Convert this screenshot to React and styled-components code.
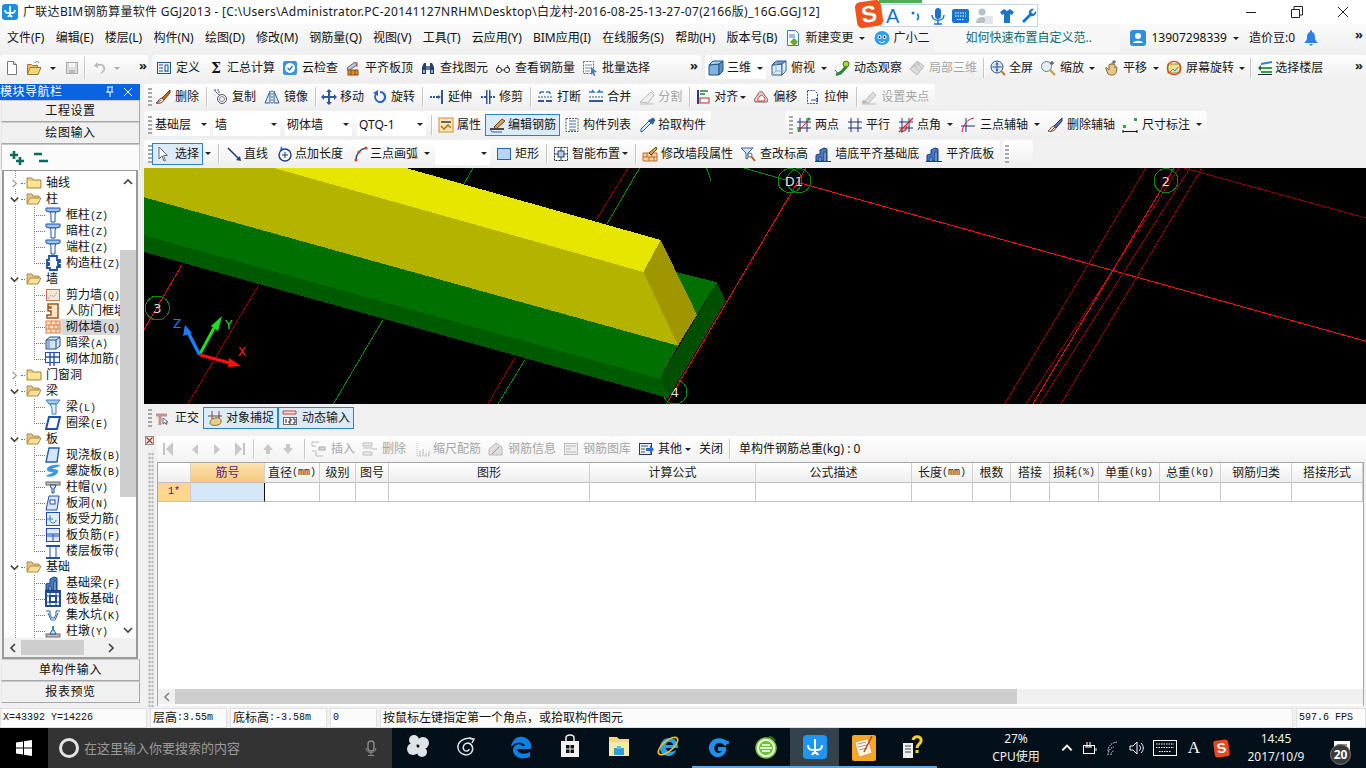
import React from 'react';
import styled, { createGlobalStyle, css } from 'styled-components';

const Global = createGlobalStyle`
  html, body { margin: 0; padding: 0; background: #f0f0f0; overflow: hidden; }
  * { box-sizing: border-box; }
`;

const UI = `"Noto Sans", "Noto Sans CJK SC", sans-serif`;
const MONO = `"Liberation Mono", "Noto Sans CJK SC", monospace`;

const Page = styled.div`
  width: 1366px; height: 768px; overflow: hidden; position: relative;
  display: flex; flex-direction: column; background: #f0f0f0;
  font: 12px/16px ${UI}; color: #111;
`;

/* ---------- icons ---------- */
const Svg = styled.svg`flex: none; display: block;`;
const columnIcon = <><path d="M1 1h14v3l-4 1H5L1 4z" fill="#9cc4ee" stroke="#1f4fa8" /><path d="M5 5h6l-1 2v8H6V7z" fill="#fff" stroke="#1f4fa8" /></>;
const buildIcon = <><path d="M1 15V9l4-1V4l4-2 3 1v12z" fill="#4a78c0" stroke="#173e84" /><path d="M4 15v-4h2v4M9 15V6h2v9" fill="#cfe0f5" stroke="#173e84" /><path d="M0 15.5h16" stroke="#173e84" /></>;
const ICONS = {
  logo: <><rect x="0" y="0" width="16" height="16" rx="3" fill="#1a8fe8" /><path d="M8 2v9M3 6c0 3 2 3 5 3s5 0 5-3M6 13c1-2 3-2 4 0" fill="none" stroke="#fff" strokeWidth="1.8" /></>,
  new: <><path d="M3.5 1.5h6l3 3v10h-9z" fill="#fff" stroke="#777" /><path d="M9.5 1.5v3h3" fill="#ddd" stroke="#777" /></>,
  open: <><path d="M1.5 14V4.5h4l1 1h5V8" fill="#e8c36a" stroke="#9a7a2a" /><path d="M1.5 14.5l2.5-7h11l-3 7z" fill="#f3d67f" stroke="#9a7a2a" /><path d="M9 3c1-2 3-2 4 0" fill="none" stroke="#3a7bd0" /></>,
  save: <><rect x="2.5" y="2.5" width="11" height="11" fill="#ddd" stroke="#aaa" /><rect x="5" y="3" width="6" height="4" fill="#f5f5f5" /><rect x="5" y="10" width="6" height="3" fill="#bbb" /></>,
  undo: <path d="M5 2L2 6l4 2V6c4-1 6 1 5 4l-3 4c4-1 6-4 5-7-1-3-4-4-7-3z" fill="#bbb" />,
  define: <><rect x="1.5" y="2.5" width="13" height="11" fill="#eaf2fb" stroke="#23558f" /><path d="M3 5h4M3 8h4M3 11h4M9 5v7M12 5v7M9 5h3M9 11h3" stroke="#23558f" /></>,
  cloud: <><rect x="1" y="1" width="14" height="14" rx="2" fill="#3a94dc" /><circle cx="8" cy="8" r="5" fill="#fff" /><path d="M5.5 8l2 2 3-4" fill="none" stroke="#2a7cc0" strokeWidth="1.4" /></>,
  alignTop: <><path d="M2 8l8-6 2 3-9 6z" fill="#b8c8d8" stroke="#667" /><rect x="3" y="10" width="10" height="5" fill="#e0902a" stroke="#8a4d10" /><path d="M6 10v5M10 10v5" stroke="#8a4d10" /><path d="M12 2v5" stroke="#d33" /></>,
  find: <><path d="M2 14V7l2-4h2v11zM14 14V7l-2-4h-2v11z" fill="#2a3f66" /><rect x="6" y="6" width="4" height="4" fill="#5e7aa8" /><rect x="3" y="10" width="2" height="3" fill="#8fb0de" /><rect x="11" y="10" width="2" height="3" fill="#8fb0de" /></>,
  glasses: <><circle cx="4" cy="10" r="2.6" fill="none" stroke="#333" /><circle cx="12" cy="10" r="2.6" fill="none" stroke="#333" /><path d="M6.5 10h3M1.5 9L4 5M14.5 9L12 5" stroke="#333" fill="none" /></>,
  batch: <><rect x="1.5" y="1.5" width="10" height="12" fill="#fff" stroke="#667" strokeDasharray="2 1" /><path d="M3 5h7M3 8h7M3 11h5" stroke="#7a8aa8" /><path d="M9 7l6 5-3 .5 1.5 3-1.5.5-1.5-3L9 15z" fill="#4a7ac0" /></>,
  docGreen: <><path d="M2.5 .5h8l3 3v12h-11z" fill="#fff" stroke="#3c78c8" /><path d="M4 5h6M4 7h6" stroke="#3c78c8" /><path d="M9 8l4 4-4 4-4-4z" fill="#5cae2a" /></>,
  mascot: <><ellipse cx="8" cy="8" rx="7.5" ry="7" fill="#2f9ff0" /><circle cx="5.5" cy="7" r="2" fill="#fff" /><circle cx="10.5" cy="7" r="2" fill="#fff" /><circle cx="5.5" cy="7" r="1" fill="#123" /><circle cx="10.5" cy="7" r="1" fill="#123" /><path d="M5 11c2 2 4 2 6 0" fill="none" stroke="#fff" /></>,
  user: <><rect width="16" height="16" rx="3" fill="#2f8fd8" /><circle cx="8" cy="6" r="3" fill="#fff" /><path d="M3 13c1-3 9-3 10 0z" fill="#fff" /></>,
  bell: <><path d="M8 0c1 0 1 1 1 2 3 1 3 4 3 6s1 3 3 5H1c2-2 3-3 3-5s0-5 3-6c0-1 0-2 1-2z" fill="#2a7fe8" /><path d="M6 14h4l-2 2z" fill="#2a7fe8" /></>,
  cube: <><path d="M1 5l10-1v11H1z" fill="#7fb2dc" stroke="#1f5588" /><path d="M1 5l4-4h10l-4 3z" fill="#a8d0f0" stroke="#1f5588" /><path d="M11 4l4-3v10l-4 4z" fill="#5a90c0" stroke="#1f5588" /></>,
  cubeV: <><path d="M1 5l10-1v11H1z" fill="#dbeaf7" stroke="#2a5f96" /><path d="M1 5l4-4h10l-4 3z" fill="#6a9ed0" stroke="#2a5f96" /><path d="M11 4l4-3v10l-4 4z" fill="#eaf3fb" stroke="#2a5f96" /><path d="M5 1v10l-4 4M5 11h10" stroke="#8fb3d8" fill="none" /></>,
  orbit: <><path d="M2 14c3 1 10-5 12-11" fill="none" stroke="#2c8a2c" strokeWidth="3" /><circle cx="12" cy="4" r="3" fill="#a6d63a" stroke="#3a7a1a" /><path d="M1 10c2 3 4 4 7 4" fill="none" stroke="#3a64b0" /></>,
  local3d: <><path d="M8 1l7 5-7 9-7-6z" fill="#ddd" stroke="#bbb" /><path d="M4 4l7 8M8 2l5 7M2 8l8-5" stroke="#bbb" /></>,
  full: <><circle cx="7" cy="7" r="6" fill="#d8e8f8" stroke="#2b4f8a" /><path d="M7 2.5v9M2.5 7h9" stroke="#2b4f8a" /><path d="M7 2.5l-1.5 2h3zM7 11.5l-1.5-2h3z" fill="#2b4f8a" /><path d="M11 11l4 4" stroke="#c07820" strokeWidth="2" /></>,
  zoom: <><circle cx="6.5" cy="6.5" r="5" fill="#e6eef8" stroke="#6a7a8a" /><path d="M10 10l5 5" stroke="#c8a23a" strokeWidth="2.4" /><path d="M12 1v4M10 3h4" stroke="#335" /></>,
  pan: <><path d="M3 9l2 5c3 2 7 1 8-1l1-5c0-2-2-1-2 0V5c0-1-2-1-2 0V4c0-1-2-1-2 0v1C8 4 6 4 6 5v5L4 8c-1-1-2 0-1 1z" fill="#e4c88a" stroke="#8a6a30" /><path d="M11 0v4M9 2h4" stroke="#446" /></>,
  rot: <><rect x="2" y="4" width="12" height="9" fill="#f4e28a" stroke="#7a9a3a" /><circle cx="8" cy="8" r="6.7" fill="none" stroke="#d8442a" strokeWidth="1.3" /><path d="M4 12l3-3 2 2 3-4" fill="none" stroke="#3a8acc" /></>,
  floors: <><path d="M4 3l11-2v2L4 5z" fill="#2a7fc8" /><path d="M4 7h11v2H4zM4 11h11v2H4z" fill="#3a9a4a" /><path d="M4 5L1 8l3 3z" fill="#1e6a2a" /><path d="M1 14.5h14" stroke="#224" /></>,
  brush: <><path d="M15 1L7 9l2 2 6-7z" fill="#c06a28" stroke="#6a3a18" /><path d="M7 9c-3 0-3 3-6 5 3 1 7 0 8-3z" fill="#e8e0c0" stroke="#555" /><path d="M2 14l4-3" stroke="#c33" /></>,
  copy: <><circle cx="10" cy="10" r="4.5" fill="none" stroke="#556" /><circle cx="10" cy="10" r="2.5" fill="none" stroke="#88a" /><path d="M2 1h5v5" fill="none" stroke="#556" strokeDasharray="2 1" /><path d="M2 1l5 5" stroke="#4a7ac0" /></>,
  mirror: <><path d="M1 14L6 2v12zM15 14L10 2v12z" fill="#dbe7f4" stroke="#2f5f96" /><path d="M8 1v14" stroke="#2f5f96" strokeDasharray="2 1" /></>,
  move: <><path d="M8 0l3 3H9v4h4V5l3 3-3 3V9H9v4h2l-3 3-3-3h2V9H3v2L0 8l3-3v2h4V3H5z" fill="#33588f" /></>,
  rotate: <path d="M8 2a6 6 0 1 1-5 3l-2-1 5-3v6L4.500 6a4 4 0 1 0 3.500-2z" fill="#2b64c8" />,
  extend: <><path d="M1 8h9" stroke="#33588f" strokeDasharray="2 1" strokeWidth="2" /><path d="M9 6l3 2-3 2z" fill="#33588f" /><rect x="12" y="1" width="2" height="14" fill="#33588f" /></>,
  trim: <><path d="M1 8h5M10 8h5" stroke="#33588f" strokeWidth="2" strokeDasharray="2 1" /><rect x="6" y="1" width="1.500" height="14" fill="#33588f" /><rect x="9" y="1" width="1.500" height="14" fill="#33588f" /></>,
  brk: <><path d="M3 3l4 0M13 3H9M3 3v2M13 3v2" stroke="#2f78c0" fill="none" strokeWidth="1.400" /><path d="M1 12h6M9 12h6" stroke="#33588f" strokeWidth="2" /><path d="M1 8h14" stroke="#33588f" strokeDasharray="2 1" /></>,
  merge: <><path d="M1 3h5l-2-2M15 3h-5l2-2" stroke="#2f78c0" fill="none" strokeWidth="1.400" /><path d="M1 12h14" stroke="#33588f" strokeWidth="2" /><path d="M1 8h14" stroke="#33588f" strokeDasharray="2 1" /></>,
  split: <><path d="M1 13L12 3l3 3-6 8z" fill="#eee" stroke="#bbb" /><path d="M1 15h14M12 1l3 3" stroke="#bbb" /></>,
  align: <><path d="M2 1v14" stroke="#1f3f88" strokeWidth="2" /><path d="M4 2h8M4 5h5" stroke="#2a7a3a" strokeWidth="1.400" /><rect x="4" y="9" width="9" height="5" fill="none" stroke="#c0342a" /></>,
  offset: <><path d="M2 13c-2-4 2-5 3-8 1-3 5-3 6 0s5 4 3 8z" fill="#f6c8c0" stroke="#667" /><path d="M5 12c-1-3 1-3 2-5 1-1 2-1 3 0s3 3 1 5z" fill="#fff" stroke="#c0443a" /></>,
  stretch: <><path d="M2.500 1.500h7l3 3v10h-10z" fill="#fff" stroke="#2a4f88" strokeDasharray="2 1" /><path d="M6 11h7M11 9l2 2-2 2" stroke="#2a4f88" fill="none" /></>,
  grip: <><path d="M3 13L12 3l3 3-7 8z" fill="#ddd" stroke="#bbb" /><circle cx="3" cy="13" r="2" fill="#bbb" /><path d="M1 15h14" stroke="#bbb" /></>,
  attr: <><rect x="1" y="1" width="14" height="14" fill="#fce7b8" stroke="#d88a30" /><path d="M3 5h10" stroke="#666" strokeWidth="2" /><path d="M3 9l3 3 4-4 3 3" fill="none" stroke="#b5781a" strokeWidth="1.600" /></>,
  edit: <><path d="M1 12h14" stroke="#222" strokeWidth="1.600" /><path d="M5 10l8-8 3 2-9 8z" fill="#d9a24a" stroke="#6a4418" /><path d="M1 12l2 3h10" stroke="#2a5fa8" fill="none" /></>,
  list: <><rect x="2" y="1.500" width="12" height="13" fill="#fff" stroke="#555" strokeDasharray="2 1" /><path d="M5 4h7M5 7h7M5 10h7M5 13h7" stroke="#3a6ab0" /></>,
  pick: <><path d="M1 15l2-1 8-8-2-2-8 8z" fill="#dbeafb" stroke="#2a5fa8" /><path d="M8 3l5 5 1-3 1-1c1-1-2-4-3-3l-1 1z" fill="#2a5fa8" /></>,
  twoPt: <><path d="M4 1v14M11 1v14M1 5h14M1 11h14" stroke="#1f2f7a" /><path d="M2 15L14 1" stroke="#d32222" /><circle cx="3" cy="13" r="1.500" fill="#2a9a2a" /><circle cx="13" cy="2" r="1.500" fill="#2a9a2a" /></>,
  par: <path d="M4 1v14M11 1v14M1 5h14M1 11h14" stroke="#1f2f7a" fill="none" />,
  ang: <><path d="M4 1v14M11 1v14M1 5h14M1 11h14" stroke="#1f2f7a" /><path d="M1 15L15 1M3 15c4-1 6-3 6-6" stroke="#d32222" fill="none" strokeWidth="1.300" /></>,
  arcA: <><path d="M1 9h14M6 1v14" stroke="#1f2f7a" /><path d="M2 15C3 7 8 2 14 1" fill="none" stroke="#d32222" /></>,
  delA: <><path d="M15 1L7 9l2 2 6-7z" fill="#4a78c0" stroke="#234" /><path d="M7 9c-3 0-3 3-6 5 3 1 7 0 8-3z" fill="#eadfc8" stroke="#555" /><path d="M3 15l9-9" stroke="#d33" /></>,
  dim: <><rect x="1" y="8" width="3" height="3" fill="#3ca03c" /><rect x="12" y="1" width="3" height="3" fill="#3ca03c" /><path d="M1 13v3M15 13v3M1 14.500h14" stroke="#111" /></>,
  cursor: <path d="M4 1v12l3-3 2 5 1.500-.5-2-5h4z" fill="#fff" stroke="#667" />,
  line: <><path d="M2 2l11 11" stroke="#1f3f7a" strokeWidth="1.600" /><path d="M15 15l-5-1 4-4z" fill="#1f3f7a" /></>,
  ptLen: <><circle cx="9" cy="9" r="6" fill="none" stroke="#1f3f7a" strokeWidth="1.400" /><path d="M9 6v6M6 9h6" stroke="#1f3f7a" /><path d="M5 0l2 3-3 2z" fill="#1f6ad0" /></>,
  arc: <><path d="M3 14C3 8 7 3 13 2" fill="none" stroke="#1f4f90" strokeWidth="1.500" /><circle cx="3" cy="14" r="1.600" fill="#d8442a" /><circle cx="6" cy="6" r="1.600" fill="#d8442a" /><circle cx="13" cy="2" r="1.600" fill="#d8442a" /></>,
  rect: <rect x="1.500" y="2.500" width="13" height="11" fill="#b7d3f5" stroke="#2a5fb0" />,
  smart: <><rect x="1.500" y="1.500" width="13" height="13" fill="#fff" stroke="#222" strokeDasharray="2 1" /><rect x="5" y="5" width="6" height="6" fill="#b8cde8" stroke="#246" /><path d="M8 1v4M8 11v4M1 8h4M11 8h4" stroke="#246" /></>,
  wallP: <><path d="M1 7h14v8H1z" fill="#f6d3a8" stroke="#c06a28" /><path d="M1 11h14M5 7v4M10 7v4M7 11v4M12 11v4" stroke="#c06a28" /><path d="M7 7l7-6 1 2-6 6z" fill="#d8a84a" stroke="#66481a" /></>,
  elev: <><path d="M1 2h12L8 7v5l-2 1V7z" fill="#d6e2ef" stroke="#3a64a0" /><path d="M11 10l4 5" stroke="#a06a20" strokeWidth="2" /><circle cx="10" cy="9" r="2" fill="#fff" stroke="#666" /></>,
  wallB: buildIcon,
  ortho: <><path d="M1 5h11" stroke="#c89090" strokeWidth="3" /><path d="M5 4v11" stroke="#c89090" strokeWidth="3" /><path d="M8 8v6l2-1.500 1 2 1-.5-1-2h2z" fill="#fff" stroke="#667" /></>,
  snap: <><path d="M1 6h14" stroke="#555" /><path d="M5 1v8M12 1v8" stroke="#a33" /><path d="M3 13c0-4 5-6 9-5 3 1 3 6-1 7-4 1-8 0-8-2z" fill="#e6cf8a" stroke="#8a6a2a" /></>,
  dyn: <><path d="M1 1h13v3H1z" fill="#f8dfd8" stroke="#c0443a" /><rect x="1.500" y="7.500" width="13" height="7" fill="#fff" stroke="#667" /><path d="M4 9v4M7 9h2v2H7v2h2M11 9h2v4h-2" stroke="#222" fill="none" /></>,
  close: <><rect x="0.500" y="0.500" width="11" height="11" fill="#f4e7e2" stroke="#777" /><path d="M2 2l8 8M10 2l-8 8" stroke="#9a3a2a" strokeWidth="1.500" /></>,
  first: <><path d="M3 2v12" stroke="#c4c4c4" strokeWidth="2" /><path d="M12 1v14L5 8z" fill="#c8c8c8" /></>,
  prev: <path d="M11 3v11L5 8.500z" fill="#c8c8c8" />,
  next: <path d="M5 3v11l6-5.500z" fill="#c8c8c8" />,
  last: <><path d="M13 2v12" stroke="#c4c4c4" strokeWidth="2" /><path d="M4 1v14l7-7z" fill="#c8c8c8" /></>,
  up: <path d="M8 3l5 6h-3v4H6V9H3z" fill="#c8c8c8" />,
  down: <path d="M8 13l5-6h-3V3H6v4H3z" fill="#c8c8c8" />,
  ins: <><path d="M2 1h7M2 1v4h4M2 10h4v5h7" stroke="#bbb" fill="none" /><rect x="9" y="6" width="6" height="3" fill="#ddd" stroke="#aaa" /></>,
  del: <><path d="M1 2h9v3H1zM1 7h9M1 11h9v3H1z" fill="#eee" stroke="#bbb" /><path d="M10 8h5" stroke="#bbb" /></>,
  scale: <><path d="M2 2v13h13" stroke="#bbb" fill="none" strokeDasharray="1 1" /><path d="M5 15v-5M8 15V8M11 15v-3M14 15v-5" stroke="#bbb" /></>,
  info: <><path d="M1 14V8l7-6 6 4v8z" fill="#ddd" stroke="#bbb" /><path d="M4 13l7-7" stroke="#999" /></>,
  lib: <><rect x="1.500" y="2.500" width="13" height="11" fill="#eee" stroke="#bbb" /><path d="M3 5h10M3 8h5M3 11h10" stroke="#bbb" /></>,
  other: <><rect x="1.500" y="2.500" width="12" height="11" fill="#e8f0fa" stroke="#335" /><path d="M3 5h7M3 8h4M3 11h4" stroke="#556" /><path d="M8 7h4V4l4 4.500L12 13v-3H8z" fill="#2a6ad8" /></>,
  plus: <><path d="M1 5h8M5 1v8M7 11h8M11 7v8" stroke="#0f6a5e" strokeWidth="2.600" /></>,
  minus: <path d="M1 4h8M6 11h9" stroke="#0f6a5e" strokeWidth="2.600" />,
  folder: <><path d="M1 13V3h5l1 2h8v8z" fill="#f3cd66" stroke="#a98a4a" /><rect x="2" y="6" width="12" height="6" fill="#fbe69a" /></>,
  folderO: <><path d="M1 13V3h5l1 2h6v2" fill="#e8c878" stroke="#a98a4a" /><path d="M1 13l3-6h11l-3 6z" fill="#fbe09a" stroke="#a98a4a" /></>,
  col: columnIcon,
  cons: <path d="M4 1h8v4h3v2h-2v3h2v2h-3v3H5v-2H2v-3h2V8H2V5h2z" fill="#fff" stroke="#1f4fa8" strokeWidth="1.800" />,
  shear: <><rect x="1.500" y="2.500" width="13" height="11" fill="#f4e8de" stroke="#c8784a" /><path d="M3 12l3-4 3 2 3-5" stroke="#8a8a8a" strokeDasharray="1 1" fill="none" /></>,
  door: <path d="M3 1h10v14H2v-3h4V8H3V5h3V4H3z" fill="#f8e6c8" stroke="#a05a1a" strokeWidth="1.500" />,
  brick: <><rect x="1" y="2" width="14" height="12" fill="#fbe0c0" stroke="#d8804a" /><path d="M1 6h14M1 10h14M6 2v4M11 2v4M4 6v4M9 6v4M13 6v4M6 10v4M11 10v4" stroke="#d8804a" /></>,
  darkB: <><path d="M1 5l4-3h10v9l-4 3H1z" fill="#d8e4f0" stroke="#1f4f90" /><path d="M1 5h10v9M11 5l4-3" fill="none" stroke="#1f4f90" /><rect x="2" y="6" width="3" height="7" fill="#8fb0d8" /></>,
  wallBar: <><rect x="0.500" y="1.500" width="14" height="10" fill="none" stroke="#1f4fb0" /><path d="M5 1v14M9 1v14M0 6h15" stroke="#1f4fb0" strokeWidth="1.400" /></>,
  beam: <><path d="M1 1h14l-3 4H4z" fill="#a8cbee" stroke="#3a7cc0" /><path d="M5 5h6v10H7V9z" fill="#e4f0fb" stroke="#3a7cc0" /></>,
  ring: <path d="M4 2h11l-3 12H1z" fill="#fff" stroke="#1f4fb0" strokeWidth="2" />,
  slab: <path d="M4 1h10l-2 14H1z" fill="#d4e6fa" stroke="#1f5fb0" strokeWidth="1.400" />,
  spiral: <path d="M2 6c0-4 10-5 13-4-1 3-6 2-8 4 3 0 7 0 6 3-1 4-9 6-12 4 2-2 6-2 7-4-3 0-6 0-6-3z" fill="#3a9ae0" />,
  cap: <><rect x="1" y="3" width="14" height="3" fill="#c0c0c0" stroke="#666" /><path d="M5 6h6l-1 3H9v5H7V9H6z" fill="#dbe8f8" stroke="#1f4fb0" /></>,
  hole: <><path d="M4 1h10l-2 14H1z" fill="#dbe7f8" stroke="#1f4fb0" /><rect x="5" y="5" width="5" height="4" fill="#fff" stroke="#1f4fb0" /></>,
  sBar: <><rect x="1.500" y="1.500" width="13" height="13" fill="#e0ecf8" stroke="#1f4fb0" /><path d="M5 4v5c0 4 6 4 6 0M2 8h6" fill="none" stroke="#3a7cc0" /></>,
  nBar: <><rect x="1.500" y="1.500" width="13" height="13" fill="#e0ecf8" stroke="#1f4fb0" /><path d="M2 7h12M2 9h12M8 7v7" stroke="#1f4fb0" fill="none" /></>,
  band: <><path d="M1 3h14M1 15h14" stroke="#1f4fb0" strokeWidth="2" /><path d="M5 3v12M11 3v12" stroke="#1f4fb0" /></>,
  fBeam: buildIcon,
  raft: <><rect x="1" y="1" width="14" height="14" fill="#fff" stroke="#1f4f90" strokeWidth="2" /><rect x="5" y="5" width="6" height="6" fill="#fff" stroke="#1f4f90" strokeWidth="2" /><path d="M1 5h14M1 11h14M5 1v14M11 1v14" stroke="#1f4f90" /></>,
  pit: <><path d="M1 4h4v4l2 3h2l2-3V4h4M3 6l3 7h4l3-7" fill="none" stroke="#1f5fb0" /><path d="M6 11h4v2H6z" fill="#9fc4ea" /></>,
  pier: <><rect x="1" y="11" width="14" height="3" fill="#c0c0c0" stroke="#666" /><path d="M5 11l2-4h2l2 4z" fill="#dbe8f8" stroke="#1f4fb0" /><rect x="7" y="3" width="2" height="4" fill="#3a7cc0" /></>,
  microphone: <><rect x="5" y="1" width="6" height="10" rx="3" fill="none" stroke="#8a8a8a" strokeWidth="1.400" /><path d="M3 8c0 6 10 6 10 0M8 13v2M5 15.500h6" fill="none" stroke="#8a8a8a" /></>,
};

const Icon = ({ name, size = 16 }) => (
  <Svg width={size} height={size} viewBox="0 0 16 16">{ICONS[name]}</Svg>
);

const TASK_ART = {
  pin: <g fill="#dfe4e8"><ellipse cx="8" cy="15" rx="6" ry="6" /><ellipse cx="18" cy="9" rx="6" ry="6" /><ellipse cx="9" cy="6" rx="5" ry="5" /><ellipse cx="17" cy="18" rx="5" ry="5" /><circle cx="13" cy="12" r="1.500" fill="#111" /></g>,
  swirl: <g fill="none" stroke="#dfe4e8" strokeWidth="1.500"><path d="M19 5C11 2 3 8 4 14c1 6 9 9 13 5 3-3 2-9-3-10-4 0-6 4-4 7 2 2 5 1 5-1" /><path d="M15 4l5 1-2 4" /></g>,
  edge: <path d="M2 13C3 5 9 2 14 3c6 1 9 6 8 12H8c1 5 8 6 13 3v5c-7 3-16 1-17-6 0-2 0-3 1-4 1-3 6-4 9-1l2 0c-1-4-9-5-14 1z" fill="#0f7fe0" />,
  store: <g><path d="M3 7h18v16H3z" fill="#f2f2f2" /><path d="M8 8V4c0-4 8-4 8 0v4" fill="none" stroke="#f2f2f2" strokeWidth="1.500" /><path d="M8 11h3.500v3.500H8zM12.500 11H16v3.500h-3.500zM8 15.500h3.500V19H8zM12.500 15.500H16V19h-3.500z" fill="#111" /></g>,
  explorer: <g><path d="M2 3h8l2 2h10v17H2z" fill="#f4d97a" /><rect x="2" y="8" width="20" height="14" fill="#fbe9a4" /><rect x="7" y="14" width="10" height="7" fill="#2f9ed8" /><rect x="10" y="12" width="4" height="3" fill="#56bdf0" /></g>,
  ie: <g><path d="M4 14c0-6 4-10 9-10 6 0 9 4 9 10H10c0 4 6 5 10 2-1 4-4 6-8 6-5 0-8-4-8-8zm6-3h7c0-4-7-4-7 0z" fill="#2ba0e8" /><ellipse cx="12" cy="12" rx="12" ry="5" transform="rotate(-40 12 12)" fill="none" stroke="#f2c01e" strokeWidth="1.600" /></g>,
  g: <path d="M22 6c-6-5-16-3-18 5-1 7 5 12 10 11 5-1 8-5 7-10h-8v4h4c-1 2-5 3-7 0-2-3 0-8 4-8 3 0 4 1 6 3l2-2c3 0 3-2 2-3z" fill="#1f8ff0" />,
  green: <g><circle cx="12" cy="13" r="10" fill="#e8f8d8" stroke="#7ac23a" strokeWidth="1.500" /><circle cx="12" cy="13" r="7" fill="#6cc03a" /><path d="M6 13h12M8 10h8M8 16h8" stroke="#fff" strokeWidth="1.400" /><path d="M15 2c3 0 6 2 6 4" fill="none" stroke="#2a7a2a" strokeWidth="1.500" /></g>,
  glodon: <g><rect x="0" y="0" width="24" height="24" rx="4" fill="#1d97f2" /><path d="M12 4v14M5 10c0 5 3 5 7 5s7 0 7-5M9 20c1-3 5-3 6 0" fill="none" stroke="#fff" strokeWidth="2" /></g>,
  note: <g><rect x="0" y="0" width="24" height="26" rx="2" fill="#f5a623" /><path d="M3 7l13-3 4 14-13 4z" fill="#fdf4d8" stroke="#b37" strokeWidth=".3" /><path d="M6 9l8-2M6 12l9-2M7 15l8-2" stroke="#999" /><path d="M20 1L12 17" stroke="#b8442a" strokeWidth="1.600" /></g>,
  help: <g><rect x="2" y="8" width="10" height="15" fill="#eee" /><path d="M4 11h6M4 14h6M4 17h6" stroke="#444" /><path d="M12 5c1-5 9-4 8 1 0 3-4 3-4 7" fill="none" stroke="#f2d21e" strokeWidth="3" /><rect x="14.500" y="15" width="3" height="3" fill="#f2d21e" /></g>,
};
const TaskArt = ({ name }) => <Svg width="24" height="26" viewBox="0 0 24 26">{TASK_ART[name]}</Svg>;

/* ---------- shared bits ---------- */
const Caret = styled.i`
  flex: none; width: 0; height: 0; margin: 0 ${p => p.$m ?? 0}px 0 ${p => p.$ml ?? 0}px;
  border-left: 3px solid transparent; border-right: 3px solid transparent;
  border-top: 3px solid ${p => (p.$gray ? '#b0b0b0' : '#222')};
`;
const Sep = styled.i`
  flex: none; width: 1px; height: ${p => p.$h ?? 20}px; margin: 0 ${p => p.$r ?? 6}px 0 ${p => p.$l ?? 0}px;
  background: #c6c6c6; box-shadow: 1px 0 0 #fff;
`;
const Grip = styled.i`
  flex: none; width: 4px; height: 18px; margin: 0 ${p => p.$r ?? 4}px 0 ${p => p.$l ?? 4}px;
  background: repeating-linear-gradient(to bottom, #a8a8a8 0 2px, transparent 2px 4px);
`;
const More = styled.span`
  font: bold 13px/14px ${UI}; color: #222; margin-left: auto; padding-right: ${p => p.$r ?? 3}px; align-self: flex-start; margin-top: 3px;
`;
const Latin = styled.span`font: ${p => (p.$bold ? 'bold ' : '')}10px/16px ${MONO};`;
const Mixed = ({ text, bold }) => (
  <>{text.split(/([\x00-\x7f]+)/).filter(Boolean).map((t, i) =>
    /^[\x00-\x7f]/.test(t) ? <Latin key={i} $bold={bold}>{t}</Latin> : <span key={i}>{t}</span>)}</>
);

/* ---------- title bar ---------- */
const TitleBar = styled.header`
  height: 24px; flex: none; display: flex; align-items: center; background: #fff; padding-left: 2px;
`;
const TitleText = styled.div`margin-left: 5px; font-size: 12px; letter-spacing: .3px; white-space: nowrap; color: #1a1a1a;`;
const WinButtons = styled.div`margin-left: auto; display: flex; height: 100%;`;
const WinBtn = styled.div`width: 46px; display: flex; align-items: center; justify-content: center;`;

const Sogou = styled.div`
  position: absolute; left: 855px; top: 0; width: 184px; height: 28px; z-index: 5;
`;
const SogouStrip = styled.div`position: absolute; left: 24px; top: 0; width: 43px; height: 3px; background: #4cae4c;`;
const SogouBox = styled.div`
  position: absolute; left: 25px; top: 4px; width: 158px; height: 23px; background: #fff; border: 1px solid #c5d5e5;
  display: flex; align-items: center; gap: 6px; padding-left: 5px;
`;
const SogouA = styled.span`font: 20px/20px "Liberation Sans", sans-serif; color: #1c74c8; width: 17px;`;
const SogouLogo = styled.div`
  position: absolute; left: 1px; top: 1px; width: 26px; height: 26px; border-radius: 5px; transform: rotate(-8deg);
  background: #f0541e; color: #fff; font: bold 23px/26px "Liberation Sans", sans-serif; text-align: center;
`;

/* ---------- menu ---------- */
const MenuBar = styled.nav`
  height: 28px; flex: none; display: flex; align-items: center; padding-left: 7px;
  background: linear-gradient(#fafafa, #f0f0f0); white-space: nowrap;
`;
const MenuItem = styled.span`margin-right: ${p => p.$r ?? 11.2}px; flex: none;`;
const Banner = styled.div`
  flex: none; width: 186px; height: 28px; margin: 0 0 0 5px; padding-left: 31px; background: #f7f7f7; color: #0e6a6a;
  display: flex; align-items: center;
`;
const MenuGroup = styled.div`
  flex: none; display: flex; align-items: center; gap: 5px; height: 28px; margin-left: ${p => p.$l ?? 0}px;
`;
const BellSlot = styled.span`margin-left: 3px; display: block;`;

/* ---------- toolbars ---------- */
const ToolRow = styled.div`
  height: ${p => p.$h}px; flex: none; display: flex; align-items: ${p => p.$align ?? 'center'}; white-space: nowrap;
  background: #f0f0f0; padding-left: ${p => p.$pl ?? 0}px;
`;
const ToolGroup = styled.div`
  flex: ${p => (p.$w ? 'none' : '1')}; width: ${p => (p.$w ? `${p.$w}px` : 'auto')}; height: ${p => p.$gh ?? 26}px;
  margin-left: ${p => p.$l ?? 0}px; padding-left: ${p => p.$pl ?? 0}px;
  display: flex; align-items: center; border-radius: 3px;
  background: linear-gradient(#ffffff, #f3f3f3 70%, #eeeeee);
`;
const Btn = styled.div`
  flex: none; display: flex; align-items: center; gap: ${p => p.$g ?? 4}px; height: 22px;
  margin-right: ${p => p.$r ?? 8}px; margin-left: ${p => p.$ml ?? 0}px;
  color: ${p => (p.$gray ? '#a6a6a6' : '#161616')};
  ${p => p.$active && css`
    background: #dcebf8; border: 1px solid #2a82c8; padding: 0 3px 0 ${p.$apl ?? 3}px;
  `}
  ${p => p.$white && css`background: #fff; padding: 0 3px;`}
`;
/* cm = distance from the label to the caret, whatever the button's gap */
const Tool = ({ icon, label, caret, cm = 5, ...rest }) => (
  <Btn {...rest}>
    <Icon name={icon} />
    {label && <span>{label}</span>}
    {caret && <Caret $ml={cm - (rest.$g ?? 4)} $gray={rest.$gray} />}
  </Btn>
);
const SumMark = styled.span`font: bold 14px/16px "DejaVu Serif", serif; width: 16px; text-align: center;`;
const Select = styled.div`
  flex: none; width: ${p => p.$w}px; height: 22px; margin-right: ${p => p.$r ?? 4}px; background: #fff;
  display: flex; align-items: center; justify-content: space-between; padding: 0 3px 0 2px;
`;

/* ---------- nav panel ---------- */
const Main = styled.div`flex: 1; min-height: 0; display: flex;`;
const Nav = styled.aside`
  width: 140px; flex: none; margin-right: 4px; display: flex; flex-direction: column;
`;
const NavHead = styled.div`
  height: 16px; flex: none; background: #0a63e0; color: #fff; display: flex; align-items: center; padding-right: 4px;
  font: 12px/16px ${UI};
`;
const NavTitle = styled.span`letter-spacing: .5px; margin-right: auto;`;
const NavButton = styled.div`
  height: 22px; flex: none; margin: 0 0 0 1px; background: #f0f0f0; border: 1px solid #a8a8a8; border-top-color: #ccc; border-left-color: #e8e8e8;
  display: flex; align-items: center; justify-content: center; letter-spacing: .6px;
`;
const TreeTools = styled.div`
  height: 26px; flex: none; display: flex; align-items: center; gap: 8px; padding-left: 7px; margin-left: 1px;
  border: 1px solid #c8c8c8; border-bottom: 0; background: #fbfbfb;
`;
const TreePanel = styled.div`
  flex: none; height: 489px; margin: 0 2px; border: 1px solid #9a9a9a; border-width: 1px 2px 2px 2px; display: flex; flex-direction: column; background: #fff;
`;
const TreeBody = styled.div`flex: 1; min-height: 0; display: flex;`;
const TreeList = styled.div`
  flex: 1; min-width: 0; overflow: hidden; padding-top: 4px;
  background: repeating-linear-gradient(to bottom, #8a8a8a 0 1px, transparent 1px 2px) 11px 0 / 1px 100% no-repeat #fff;
`;
const TreeRow = styled.div`height: 16px; display: flex; align-items: center; white-space: nowrap; font-size: 12px;`;
const Arrow = styled.span`
  width: 11px; height: 11px; flex: none; margin-left: 5px; background: #fff; display: flex; align-items: center; justify-content: center;
`;
const HeadDots = styled.i`width: 4px; flex: none; margin: 0 1px; border-top: 1px dotted #777;`;
const HeadLabel = styled.span`margin-left: 4px;`;
const Kids = styled.div`margin-left: 30px;`;
const KidRow = styled(TreeRow)`
  background: repeating-linear-gradient(to bottom, #8a8a8a 0 1px, transparent 1px 2px) 0 0 / 1px ${p => (p.$last ? '50%' : '100%')} no-repeat;
`;
const KidDots = styled.i`width: 11px; flex: none; border-top: 1px dotted #777;`;
const KidLabel = styled.span`
  margin-left: ${p => (p.$sel ? 0 : 5)}px; padding-left: ${p => (p.$sel ? 5 : 0)}px; flex: 1; min-width: 0; overflow: hidden; height: 16px;
  ${p => p.$sel && 'background: #d9d9d9;'}
`;
const VScroll = styled.div`
  width: 16px; flex: none; background: #fff; display: flex; flex-direction: column; align-items: stretch;
`;
const Thumb = styled.div`background: #cdcdcd; flex: none; height: ${p => p.$h}px; margin-top: ${p => p.$t}px;`;
const ArrowBox = styled.div`
  height: ${p => p.$h ?? 16}px; flex: none; display: flex; align-items: center; justify-content: center;
  ${p => p.$w && `width: ${p.$w}px;`}
  ${p => p.$end && 'margin-top: auto;'}
`;
const HScroll = styled.div`height: 19px; flex: none; background: #f0f0f0; display: flex; align-items: center;`;
const HThumb = styled.div`height: 15px; background: #cdcdcd; flex: none; width: ${p => p.$w}px;`;
const Chev = ({ d, c = '#555', w = 12 }) => {
  const paths = { up: 'M2 8l4-4 4 4', down: 'M2 4l4 4 4-4', left: 'M8 2L4 6l4 4', right: 'M4 2l4 4-4 4' };
  return <Svg width={w} height={w} viewBox="0 0 12 12"><path d={paths[d]} fill="none" stroke={c} strokeWidth="1.700" /></Svg>;
};

const TREE = [
  { h: '轴线', closed: true },
  { h: '柱', kids: [['col', '框柱(Z)'], ['col', '暗柱(Z)'], ['col', '端柱(Z)'], ['cons', '构造柱(Z)']] },
  { h: '墙', kids: [['shear', '剪力墙(Q)'], ['door', '人防门框墙(Q)'], ['brick', '砌体墙(Q)', true], ['darkB', '暗梁(A)'], ['wallBar', '砌体加筋(Y)']] },
  { h: '门窗洞', closed: true },
  { h: '梁', kids: [['beam', '梁(L)'], ['ring', '圈梁(E)']] },
  { h: '板', kids: [['slab', '现浇板(B)'], ['spiral', '螺旋板(B)'], ['cap', '柱帽(V)'], ['hole', '板洞(N)'], ['sBar', '板受力筋(S)'], ['nBar', '板负筋(F)'], ['band', '楼层板带(H)']] },
  { h: '基础', kids: [['fBeam', '基础梁(F)'], ['raft', '筏板基础(M)'], ['pit', '集水坑(K)'], ['pier', '柱墩(Y)'], ['raft', '筏板主筋(R)']] },
];

/* ---------- work area ---------- */
const Work = styled.section`flex: 1; min-width: 0; display: flex; flex-direction: column;`;
const Canvas = styled.svg`display: block; flex: none; background: #000;`;
const Lower = styled.div`flex: 1; min-height: 0; display: flex; padding-top: 4px;`;
const Strip = styled.div`
  width: 13px; flex: none; display: flex; flex-direction: column; align-items: center;
`;
const StripDots = styled.div`
  flex: 1; width: 6px; margin-top: 4px;
  background-image: radial-gradient(#bdbdbd 1px, transparent 1.200px);
  background-size: 3px 4px;
`;
const Detail = styled.div`flex: 1; min-width: 0; display: flex; flex-direction: column;`;
const DetailBar = styled.div`
  height: 26px; flex: none; display: flex; align-items: center; padding-left: 4px; white-space: nowrap;
  background: linear-gradient(#ffffff, #f2f2f2);
`;
const DetailText = styled.span`flex: none; margin-left: ${p => p.$l ?? 3}px; font-size: 12px;`;
const Table = styled.div`
  flex: 1; min-height: 0; margin-bottom: 2px; margin-right: 2px; border: 1px solid #a6a6a6; border-bottom: 0; background: #fff;
  display: flex; flex-direction: column;
`;
const COLS = '33px 74px 55px 36px 33px 201px 166px 156px 61px 38px 39px 49px 61px 61px 71px 71px';
const Grid = styled.div`display: grid; grid-template-columns: ${COLS}; flex: none;`;
const HeadCell = styled.div`
  height: 20px; display: flex; align-items: center; justify-content: center; white-space: nowrap; overflow: hidden;
  border-right: 1px solid #d0d0d0; border-bottom: 1px solid #c0c0c0;
  background: ${p => (p.$on ? 'linear-gradient(#fbe3b0, #f5c97c)' : 'linear-gradient(#ffffff, #eeeeee)')};
  color: ${p => (p.$on ? '#5a1a80' : '#1a1a1a')};
`;
const BodyCell = styled.div`
  height: 19px; border-right: 1px solid ${p => (p.$cur ? '#111' : '#c8c8c8')}; border-bottom: 1px solid #c0c0c0;
  background: ${p => (p.$cur ? '#d6e8f8' : p.$idx ? '#ffd68f' : '#fff')};
  color: #5a0a80; display: flex; align-items: center; justify-content: center;
`;
const TableFill = styled.div`flex: 1;`;
const TableScroll = styled.div`height: 15px; flex: none; background: #f0f0f0; display: flex; align-items: center; margin-bottom: 2px;`;

/* ---------- status / task bars ---------- */
const Status = styled.footer`height: 20px; flex: none; display: flex; gap: 3px; background: #f0f0f0;`;
const StatusCell = styled.div`
  flex: ${p => (p.$w ? 'none' : 1)}; width: ${p => (p.$w ? `${p.$w}px` : 'auto')}; padding-left: 2px;
  background: #fbfbfb; border: 1px solid #e0e0e0; white-space: nowrap; display: flex; align-items: center; font-size: 12px;
`;
const Taskbar = styled.div`
  height: 40px; flex: none; display: flex; background: #03101a; color: #fff;
`;
const Start = styled.div`width: 48px; flex: none; background: #000; display: flex; align-items: center; justify-content: center;`;
const Search = styled.div`
  width: 344px; flex: none; background: #333; display: flex; align-items: center; padding-left: 11px; color: #9a9a9a; font-size: 13px;
`;
const Ring = styled.i`width: 20px; height: 20px; border-radius: 50%; border: 3px solid #e4e4e4; flex: none; margin-right: 5px;`;
const MicSlot = styled.div`margin-left: auto; margin-right: 13px;`;
const TaskSlot = styled.div`
  width: 49px; flex: none; display: flex; align-items: center; justify-content: center; margin-left: ${p => p.$l ?? 0}px;
  background: ${p => (p.$active ? '#34424c' : 'transparent')};
  border-bottom: 2px solid ${p => (p.$run ? '#5aa9e6' : 'transparent')};
  padding-top: ${p => (p.$run ? 2 : 0)}px;
`;
const Tray = styled.div`margin-left: auto; display: flex; height: 100%;`;
const TraySlot = styled.div`
  width: ${p => p.$w}px; flex: none; display: flex; flex-direction: column; align-items: center; justify-content: center;
  font-size: 12px; line-height: 18px; white-space: nowrap; color: #f0f0f0; position: relative;
`;
const Badge = styled.span`
  position: absolute; left: 13px; top: 16px; width: 21px; height: 21px; border-radius: 50%; background: #3a3a3a; border: 1px solid #777;
  font: bold 12px/19px ${UI}; text-align: center; color: #fff;
`;
const TrayA = styled.span`font: 17px/20px "Liberation Serif", serif; color: #fff;`;
const TrayS = styled.span`
  width: 15px; height: 17px; background: #e8481a; color: #fff; border-radius: 3px; font: bold 14px/17px "Liberation Sans", sans-serif; text-align: center; transform: rotate(-8deg);
`;

const Canvas3D = () => (
  <Canvas width="1222" height="236" viewBox="0 0 1222 236">
    <g fill="none" strokeWidth="1" shapeRendering="crispEdges">
      <path d="M484 0L451.600 53M114.800 116.700L44 236M371 190L344 236" stroke="#8c0000" />
      <path d="M495.600 0L463 56M239 151.700L189.400 236M381 191.700L354 236M329 0L319.600 16.700M562.500 0L567 12.700" stroke="#0a8a0a" />
      <path d="M38 96.700L0 161.700" stroke="#e01010" />
      <path d="M662 0L522.400 236" stroke="#f01010" />
      <path d="M600 0L644 12.700" stroke="#0a8a0a" />
      <path d="M656 15L1222 173.300" stroke="#ff1010" />
      <path d="M1040 0L1222 50" stroke="#8c0000" />
      <path d="M1002 0L860.800 236M1035 0L882 236M1046 0L896 236M1058 0L917 236" stroke="#8c0000" />
      <path d="M1030 0L889 236" stroke="#f01010" />
      <circle cx="13.400" cy="140" r="12" stroke="#0a8a0a" />
      <circle cx="646" cy="12.700" r="12" stroke="#0a8a0a" />
      <circle cx="655" cy="12.700" r="12" stroke="#0a8a0a" />
      <circle cx="1022" cy="12.700" r="12" stroke="#0a8a0a" />
      <circle cx="531" cy="224" r="12" stroke="#0a8a0a" />
    </g>
    <g shapeRendering="crispEdges">
      <polygon points="532,104 572.900,114.300 534,177.700" fill="#007000" />
      <polygon points="130,0 262,0 516.600,72 499.400,104" fill="#e6e600" />
      <polygon points="0,0 130,0 499.400,104 534,177.700 0,29.300" fill="#b3b300" />
      <polygon points="516.600,72 553,146.700 534,177.700 499.400,104" fill="#9f9600" />
      <polygon points="0,29.300 534,177.700 515.900,210.700 0,67.300" fill="#007000" />
      <polygon points="0,67.300 515.900,210.700 524.300,230 0,84" fill="#005a00" />
      <polygon points="572.900,114.300 581.700,133.300 524.300,230 515.900,210.700" fill="#004f00" />
    </g>
    <g fontFamily="DejaVu Sans, sans-serif" fontSize="13" fill="#ddd" textAnchor="middle">
      <text x="13.400" y="145">3</text>
      <text x="650" y="18">D1</text>
      <text x="1022" y="18">2</text>
      <text x="531" y="229">4</text>
    </g>
    <path d="M55.500 186.700L70 160" stroke="#1fe01f" strokeWidth="3" />
    <polygon points="78,148 67,158 74,163" fill="#1fe01f" />
    <path d="M55.500 186.700L44 164" stroke="#1a7cff" strokeWidth="3.500" />
    <polygon points="41,157 39,168 48,165" fill="#1a7cff" />
    <path d="M55.500 186.700L86 195" stroke="#ff1010" strokeWidth="3" />
    <polygon points="97,198 85,190 84,199" fill="#ff1010" />
    <g fontFamily="DejaVu Sans, sans-serif" fontSize="12" textAnchor="middle">
      <text x="33" y="160" fill="#1a7cff">Z</text>
      <text x="85" y="161" fill="#1fe01f">Y</text>
      <text x="98" y="188" fill="#ff2020">X</text>
    </g>
  </Canvas>
);

const HEADERS = ['', '筋号', '直径(mm)', '级别', '图号', '图形', '计算公式', '公式描述', '长度(mm)', '根数', '搭接', '损耗(%)', '单重(kg)', '总重(kg)', '钢筋归类', '搭接形式'];
const MENUS = ['文件(F)', '编辑(E)', '楼层(L)', '构件(N)', '绘图(D)', '修改(M)', '钢筋量(Q)', '视图(V)', '工具(T)', '云应用(Y)', 'BIM应用(I)', '在线服务(S)', '帮助(H)', '版本号(B)'];

export default function App() {
  return (
    <Page>
      <Global />
      <TitleBar>
        <Icon name="logo" />
        <TitleText>广联达BIM钢筋算量软件 GGJ2013 - [C:\Users\Administrator.PC-20141127NRHM\Desktop\白龙村-2016-08-25-13-27-07(2166版)_16G.GGJ12]</TitleText>
        <WinButtons>
          <WinBtn><Svg width="12" height="12" viewBox="0 0 12 12"><path d="M1 6.500h10" stroke="#222" /></Svg></WinBtn>
          <WinBtn><Svg width="12" height="12" viewBox="0 0 12 12"><path d="M.5 3.500h8v8h-8zM3 3V.5h8.500V9H9" fill="none" stroke="#222" /></Svg></WinBtn>
          <WinBtn><Svg width="12" height="12" viewBox="0 0 12 12"><path d="M1 1l10 10M11 1L1 11" stroke="#222" /></Svg></WinBtn>
        </WinButtons>
      </TitleBar>

      <Sogou>
        <SogouStrip />
        <SogouBox>
          <SogouA>A</SogouA>
          <Svg width="16" height="16" viewBox="0 0 16 16"><circle cx="5" cy="5" r="1.500" fill="#1c74c8" /><path d="M9 6c2 1 2 4 0 6" fill="none" stroke="#1c74c8" strokeWidth="1.800" /></Svg>
          <Svg width="16" height="18" viewBox="0 0 16 18"><rect x="5" y="1" width="6" height="11" rx="3" fill="#1c74c8" /><path d="M2 8c0 7 12 7 12 0M8 14v3M4 17h8" fill="none" stroke="#1c74c8" strokeWidth="1.500" /></Svg>
          <Svg width="17" height="14" viewBox="0 0 17 14"><rect width="17" height="14" rx="2" fill="#1c74c8" /><path d="M3 4h11M3 7h11M5 10.500h7" stroke="#fff" strokeDasharray="1.500 1" /></Svg>
          <Svg width="18" height="16" viewBox="0 0 18 16"><circle cx="7" cy="4" r="3.500" fill="#b5c0ca" /><path d="M1 15c0-8 12-8 12 0z" fill="#b5c0ca" /><rect x="10" y="8" width="8" height="8" fill="#dfe5ea" /></Svg>
          <Svg width="16" height="16" viewBox="0 0 16 16"><path d="M5 1L1 4l2 3 2-1v9h6V6l2 1 2-3-4-3-3 2z" fill="#1c74c8" /></Svg>
          <Svg width="16" height="16" viewBox="0 0 16 16"><path d="M15 3l-3 3-2-2 3-3c-3-1-6 2-5 5L1 13l2 2 7-7c3 1 6-2 5-5z" fill="#1c74c8" /></Svg>
        </SogouBox>
        <SogouLogo>S</SogouLogo>
      </Sogou>

      <MenuBar>
        {MENUS.map((m, i) => <MenuItem key={m} $r={i === MENUS.length - 1 ? 8 : undefined}>{m}</MenuItem>)}
        <Tool icon="docGreen" label="新建变更" caret cm={6} $r={9} />
        <Tool icon="mascot" label="广小二" $g={3} $r={0} />
        <Banner>如何快速布置自定义范..</Banner>
        <MenuGroup $l={10}>
          <Icon name="user" />
          <span>13907298339</span>
          <Caret $ml={1} $m={5} />
          <span>造价豆:0</span>
          <BellSlot><Icon name="bell" /></BellSlot>
        </MenuGroup>
        <More $r={3}>»</More>
      </MenuBar>

      <ToolRow $h={32}>
        <ToolGroup $w={148} $pl={4}>
          <Tool icon="new" $r={6} />
          <Tool icon="open" caret cm={8} $g={3} $r={8} />
          <Tool icon="save" $r={4} />
          <Sep $r={7} $h={22} />
          <Tool icon="undo" caret cm={6} $gray $r={0} $g={3} />
          <More $r={1}>»</More>
        </ToolGroup>
        <ToolGroup $w={549} $l={4} $pl={4}>
          <Tool icon="define" label="定义" />
          <Btn $r={7} $g={3}><SumMark>Σ</SumMark><span>汇总计算</span></Btn>
          <Tool icon="cloud" label="云检查" $r={7} />
          <Tool icon="alignTop" label="平齐板顶" $r={7} />
          <Tool icon="find" label="查找图元" $r={7} />
          <Tool icon="glasses" label="查看钢筋量" $r={7} />
          <Tool icon="batch" label="批量选择" />
          <More>»</More>
        </ToolGroup>
        <ToolGroup $l={4}>
          <Btn $white $r={5} $g={3}><Icon name="cube" /><span>三维</span><Caret $ml={3} /></Btn>
          <Tool icon="cubeV" label="俯视" caret cm={6} $r={7} />
          <Tool icon="orbit" label="动态观察" $r={7} />
          <Tool icon="local3d" label="局部三维" $gray $r={6} />
          <Sep $r={6} />
          <Tool icon="full" label="全屏" $g={3} $r={7} />
          <Tool icon="zoom" label="缩放" caret cm={5} $r={8} />
          <Tool icon="pan" label="平移" caret cm={6} $r={7} />
          <Tool icon="rot" label="屏幕旋转" caret cm={5} $r={5} />
          <Sep $r={6} />
          <Tool icon="floors" label="选择楼层" $g={2} />
          <More>»</More>
        </ToolGroup>
      </ToolRow>

      <Main>
        <Nav>
          <NavHead>
            <NavTitle>模块导航栏</NavTitle>
            <Svg width="12" height="12" viewBox="0 0 12 12"><path d="M3 1h6M4 1v5H2.500h7M6 6v5M8 1v5" stroke="#fff" fill="none" /></Svg>
            <Svg width="20" height="12" viewBox="0 0 20 12"><path d="M8 2l8 8M16 2l-8 8" stroke="#fff" /></Svg>
          </NavHead>
          <NavButton>工程设置</NavButton>
          <NavButton>绘图输入</NavButton>
          <TreeTools><Icon name="plus" /><Icon name="minus" /></TreeTools>
          <TreePanel>
            <TreeBody>
              <TreeList>
                {TREE.map(g => (
                  <div key={g.h}>
                    <TreeRow>
                      <Arrow><Chev d={g.closed ? 'right' : 'down'} c={g.closed ? '#aaa' : '#444'} w={11} /></Arrow>
                      <HeadDots />
                      <Icon name={g.closed ? 'folder' : 'folderO'} />
                      <HeadLabel>{g.h}</HeadLabel>
                    </TreeRow>
                    {g.kids && (
                      <Kids>
                        {g.kids.map(([ic, t, sel], i) => (
                          <KidRow key={t} $last={i === g.kids.length - 1}>
                            <KidDots />
                            <Icon name={ic} />
                            <KidLabel $sel={sel}><Mixed text={t} /></KidLabel>
                          </KidRow>
                        ))}
                      </Kids>
                    )}
                  </div>
                ))}
              </TreeList>
              <VScroll>
                <ArrowBox $h={22}><Chev d="up" c="#444" /></ArrowBox>
                <Thumb $h={247} $t={57} />
                <ArrowBox $end><Chev d="down" c="#444" /></ArrowBox>
              </VScroll>
            </TreeBody>
            <HScroll>
              <ArrowBox $h={15} $w={17}><Chev d="left" c="#444" /></ArrowBox>
              <HThumb $w={63} />
              <ArrowBox $h={15} $w={54}><Chev d="right" c="#444" /></ArrowBox>
            </HScroll>
          </TreePanel>
          <NavButton>单构件输入</NavButton>
          <NavButton>报表预览</NavButton>
        </Nav>

        <Work>
          <ToolRow $h={26}>
            <ToolGroup $w={791} $gh={26}>
              <Grip $r={3} />
              <Tool icon="brush" label="删除" $r={7} />
              <Sep $r={5} />
              <Tool icon="copy" label="复制" />
              <Tool icon="mirror" label="镜像" $r={7} />
              <Sep $r={5} />
              <Tool icon="move" label="移动" $g={3} />
              <Tool icon="rotate" label="旋转" $g={3} $r={7} />
              <Sep />
              <Tool icon="extend" label="延伸" $g={3} />
              <Tool icon="trim" label="修剪" $g={3} $r={7} />
              <Sep />
              <Tool icon="brk" label="打断" $r={7} />
              <Tool icon="merge" label="合并" $g={3} />
              <Tool icon="split" label="分割" $g={3} $gray $r={7} />
              <Sep $r={6} />
              <Tool icon="align" label="对齐" caret cm={2} $g={2} $r={7} />
              <Tool icon="offset" label="偏移" />
              <Tool icon="stretch" label="拉伸" $g={3} />
              <Sep $r={4} />
              <Tool icon="grip" label="设置夹点" $gray $r={0} />
            </ToolGroup>
          </ToolRow>
          <ToolRow $h={29}>
            <ToolGroup $w={567} $gh={27}>
              <Grip $r={1} />
              <Select $w={57} $r={3}><span>基础层</span><Caret /></Select>
              <Select $w={67} $r={5}><span>墙</span><Caret /></Select>
              <Select $w={67} $r={5}><span>砌体墙</span><Caret /></Select>
              <Select $w={69} $r={5}><span>QTQ-1</span><Caret /></Select>
              <Sep />
              <Tool icon="attr" label="属性" $g={3} $r={4} />
              <Btn $active $r={4} $g={3}><Icon name="edit" /><span>编辑钢筋</span></Btn>
              <Tool icon="list" label="构件列表" $g={3} $r={9} />
              <Tool icon="pick" label="拾取构件" $g={2} $r={0} />
            </ToolGroup>
            <ToolGroup $w={422} $l={74} $gh={27}>
              <Grip $r={3} />
              <Tool icon="twoPt" label="两点" $g={3} />
              <Tool icon="par" label="平行" $g={3} />
              <Tool icon="ang" label="点角" caret cm={6} $g={3} $r={7} />
              <Tool icon="arcA" label="三点辅轴" caret cm={6} $r={7} />
              <Tool icon="delA" label="删除辅轴" $r={7} />
              <Tool icon="dim" label="尺寸标注" caret cm={6} $r={0} />
            </ToolGroup>
          </ToolRow>
          <ToolRow $h={29}>
            <ToolGroup $w={856} $gh={27}>
              <Grip $r={0} />
              <Btn $active $apl={2} $r={0} $g={4}><Icon name="cursor" /><span>选择</span></Btn>
              <Caret $ml={2} />
              <Sep $l={7} $r={7} />
              <Tool icon="line" label="直线" $g={2} />
              <Tool icon="ptLen" label="点加长度" $g={3} $r={10} />
              <Tool icon="arc" label="三点画弧" caret cm={6} $g={1} $r={5} />
              <Select $w={55} $r={6}><span /><Caret /></Select>
              <Tool icon="rect" label="矩形" $g={3} $r={7} />
              <Sep />
              <Tool icon="smart" label="智能布置" caret cm={2} $g={3} $r={7} />
              <Sep />
              <Tool icon="wallP" label="修改墙段属性" $g={3} $r={7} />
              <Tool icon="elev" label="查改标高" $r={7} />
              <Tool icon="wallB" label="墙底平齐基础底" $r={7} />
              <Tool icon="wallB" label="平齐底板" $r={0} />
            </ToolGroup>
            <ToolGroup $w={30} $l={3} $gh={27}>
              <Grip $l={2} $r={2} />
            </ToolGroup>
          </ToolRow>

          <Canvas3D />

          <ToolRow $h={28}>
            <Grip $r={3} />
            <Tool icon="ortho" label="正交" $r={4} />
            <Btn $active $r={0} $g={3}><Icon name="snap" /><span>对象捕捉</span></Btn>
            <Btn $active $r={0} $g={4}><Icon name="dyn" /><span>动态输入</span></Btn>
          </ToolRow>

          <Lower>
            <Strip>
              <Icon name="close" size={12} />
              <StripDots />
            </Strip>
            <Detail>
              <DetailBar>
                <Tool icon="first" $r={10} />
                <Tool icon="prev" $r={6} />
                <Tool icon="next" $r={6} />
                <Tool icon="last" $r={6} />
                <Sep />
                <Tool icon="up" $r={4} />
                <Tool icon="down" $r={8} />
                <Sep $r={5} />
                <Tool icon="ins" label="插入" $g={5} $gray $r={7} />
                <Tool icon="del" label="删除" $gray $r={9} />
                <Tool icon="scale" label="缩尺配筋" $g={2} $gray $r={7} />
                <Tool icon="info" label="钢筋信息" $gray $r={7} />
                <Tool icon="lib" label="钢筋图库" $gray $r={7} />
                <Tool icon="other" label="其他" caret cm={3} $r={5} />
                <DetailText>关闭</DetailText>
                <Sep $l={6} $r={6} />
                <DetailText>单构件钢筋总重(kg) : 0</DetailText>
              </DetailBar>
              <Table>
                <Grid>
                  {HEADERS.map((h, i) => <HeadCell key={i} $on={i === 1}><Mixed text={h} /></HeadCell>)}
                  {HEADERS.map((h, i) => (
                    <BodyCell key={i} $idx={i === 0} $cur={i === 1}>{i === 0 && <Latin>1*</Latin>}</BodyCell>
                  ))}
                </Grid>
                <TableFill />
                <TableScroll>
                  <ArrowBox $h={15} $w={17}><Chev d="left" c="#888" /></ArrowBox>
                  <HThumb $w={842} />
                </TableScroll>
              </Table>
            </Detail>
          </Lower>
        </Work>
      </Main>

      <Status>
        <StatusCell $w={147}><Latin>X=43392 Y=14226</Latin></StatusCell>
        <StatusCell $w={77}><Mixed text="层高:3.55m" /></StatusCell>
        <StatusCell $w={97}><Mixed text="底标高:-3.58m" /></StatusCell>
        <StatusCell $w={47}><Latin>0</Latin></StatusCell>
        <StatusCell><span>按鼠标左键指定第一个角点，或拾取构件图元</span></StatusCell>
        <StatusCell $w={70}><Latin>597.6 FPS</Latin></StatusCell>
      </Status>

      <Taskbar>
        <Start>
          <Svg width="16" height="16" viewBox="0 0 16 16"><path d="M0 2.500l7-1V7.500H0zM8 1.300l8-1.200V7.500H8zM0 8.500h7v6l-7-1zM8 8.500h8V16l-8-1.200z" fill="#fff" /></Svg>
        </Start>
        <Search>
          <Ring />
          <span>在这里输入你要搜索的内容</span>
          <MicSlot><Icon name="microphone" /></MicSlot>
        </Search>
        <TaskSlot><TaskArt name="pin" /></TaskSlot>
        <TaskSlot><TaskArt name="swirl" /></TaskSlot>
        <TaskSlot $l={6}><TaskArt name="edge" /></TaskSlot>
        <TaskSlot><TaskArt name="store" /></TaskSlot>
        <TaskSlot><TaskArt name="explorer" /></TaskSlot>
        <TaskSlot><TaskArt name="ie" /></TaskSlot>
        <TaskSlot $run><TaskArt name="g" /></TaskSlot>
        <TaskSlot $run><TaskArt name="green" /></TaskSlot>
        <TaskSlot $run $active><TaskArt name="glodon" /></TaskSlot>
        <TaskSlot $run><TaskArt name="note" /></TaskSlot>
        <TaskSlot $run><TaskArt name="help" /></TaskSlot>
        <Tray>
          <TraySlot $w={80}><span>27%</span><span>CPU使用</span></TraySlot>
          <TraySlot $w={21}><Chev d="up" c="#fff" w={14} /></TraySlot>
          <TraySlot $w={26}><Svg width="16" height="14" viewBox="0 0 16 14"><rect x="1.500" y="4.500" width="11" height="8" fill="none" stroke="#fff" /><path d="M14 7v3M5 1v5M8 1v5M3 6h7" stroke="#fff" fill="none" /></Svg></TraySlot>
          <TraySlot $w={23}><Svg width="16" height="16" viewBox="0 0 16 16"><path d="M1 11c0-5 4-9 10-9M1 15c0-4 3-8 6-8M4 15c0-2 1-4 3-4" fill="none" stroke="#ddd" strokeDasharray="1.500 1" /></Svg></TraySlot>
          <TraySlot $w={22}><Svg width="16" height="16" viewBox="0 0 16 16"><path d="M1 6h3l4-4v12l-4-4H1zM10 5c2 2 2 4 0 6M12 3c3 3 3 7 0 10" fill="none" stroke="#fff" /></Svg></TraySlot>
          <TraySlot $w={33}><Svg width="24" height="16" viewBox="0 0 24 16"><rect x=".5" y=".5" width="23" height="15" fill="none" stroke="#fff" /><path d="M3 4h18M3 7.500h18M6 11.500h12" stroke="#fff" strokeDasharray="1.500 1" /></Svg></TraySlot>
          <TraySlot $w={26}><TrayA>A</TrayA></TraySlot>
          <TraySlot $w={28}><TrayS>S</TrayS></TraySlot>
          <TraySlot $w={82}><span>14:45</span><span>2017/10/9</span></TraySlot>
          <TraySlot $w={49}>
            <Svg width="16" height="14" viewBox="0 0 16 14"><path d="M0 0h16v14H0z" fill="#fff" /><path d="M3 4h10M3 7h10M3 10h10" stroke="#333" /></Svg>
            <Badge>20</Badge>
          </TraySlot>
        </Tray>
      </Taskbar>
    </Page>
  );
}
